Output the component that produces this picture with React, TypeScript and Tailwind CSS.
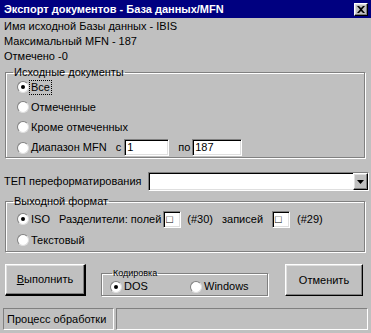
import { useState } from "react";

const raised =
  "border border-t-white border-l-white border-r-black border-b-black shadow-[inset_-1px_-1px_0_#808080,inset_1px_1px_0_#dfdfdf]";
const sunken =
  "border border-t-[#808080] border-l-[#808080] border-r-white border-b-white shadow-[inset_1px_1px_0_#000,inset_-1px_-1px_0_#dfdfdf]";
const etched =
  "border border-[#808080] shadow-[inset_1px_1px_0_#fff,1px_1px_0_#fff]";

function Radio({ checked, label, focus }: { checked?: boolean; label: string; focus?: boolean }) {
  return (
    <div className="flex items-center">
      <span className="w-[12px] h-[12px] rounded-full bg-white border border-t-[#808080] border-l-[#808080] border-r-[#dfdfdf] border-b-[#dfdfdf] flex items-center justify-center">
        {checked && <span className="w-[4px] h-[4px] rounded-full bg-black" />}
      </span>
      <span
        className={
          "ml-[1px] px-[1px] " +
          (focus ? "outline outline-1 outline-dotted outline-black" : "")
        }
      >
        {label}
      </span>
    </div>
  );
}

function Input({ value, w }: { value: string; w: string }) {
  return (
    <div className={`${sunken} ${w} h-[17px] bg-white flex items-center pl-[2px]`}>
      {value}
    </div>
  );
}

export default function App() {
  const [source] = useState(0);

  return (
    <div
      className="w-[371px] h-[333px] bg-[#c0c0c0] text-[11px] leading-[13px] text-black overflow-hidden"
      style={{ fontFamily: '"Liberation Sans", Arial, sans-serif' }}
    >
      <div className="h-[18px] bg-[#000080] flex items-center justify-between pl-[4px] pr-[3px]">
        <span className="text-white font-bold text-[11px]">Экспорт документов - База данных/MFN</span>
        <span className={`${raised} w-[14px] h-[13px] bg-[#c0c0c0] flex items-center justify-center`}>
          <svg width="8" height="7" viewBox="0 0 8 7">
            <path d="M0 0h2l2 2 2-2h2L5 3.5 8 7H6L4 5 2 7H0l3-3.5z" fill="black" />
          </svg>
        </span>
      </div>

      <div className="pt-[1px] pl-[4px] leading-[15px]">
        <div>Имя исходной Базы данных - IBIS</div>
        <div>Максимальный MFN - 187</div>
        <div>Отмечено -0</div>
      </div>

      <fieldset className={`${etched} mt-[2px] ml-[5px] mr-[6px] pl-[11px] pb-[1px] flex flex-col gap-[4px]`}>
        <legend className="-ml-[4px] px-[1px]">Исходные документы</legend>
        <div className="h-[16px] flex items-center">
          <Radio checked={source === 0} label="Все" focus />
        </div>
        <div className="h-[16px] flex items-center">
          <Radio label="Отмеченные" />
        </div>
        <div className="h-[16px] flex items-center">
          <Radio label="Кроме отмеченных" />
        </div>
        <div className="h-[17px] flex items-center">
          <Radio label="Диапазон MFN" />
          <span className="ml-[8px] mr-[3px]">с</span>
          <Input value="1" w="w-[45px]" />
          <span className="ml-[9px] mr-[2px]">по</span>
          <Input value="187" w="w-[50px]" />
        </div>
      </fieldset>

      <div className="mt-[14px] h-[19px] flex items-center pl-[4px] pr-[2px]">
        <span className="w-[144px]">ТЕП переформатирования</span>
        <div className={`${sunken} flex-1 h-[19px] bg-white flex justify-end`}>
          <span className={`${raised} w-[15px] h-full bg-[#c0c0c0] flex items-center justify-center`}>
            <svg width="7" height="4" viewBox="0 0 7 4">
              <path d="M0 0h7L3.5 4z" fill="black" />
            </svg>
          </span>
        </div>
      </div>

      <fieldset className={`${etched} mt-[4px] ml-[5px] mr-[6px] pl-[11px] pb-[3px] flex flex-col gap-[5px]`}>
        <legend className="-ml-[4px] px-[1px]">Выходной формат</legend>
        <div className="mt-[3px] h-[16px] flex items-center">
          <Radio checked label="ISO" />
          <span className="ml-[8px]">Разделители: полей</span>
          <span className="ml-[2px]">
            <Input value="□" w="w-[18px]" />
          </span>
          <span className="ml-[6px]">(#30)</span>
          <span className="ml-[9px]">записей</span>
          <span className="ml-[9px]">
            <Input value="□" w="w-[18px]" />
          </span>
          <span className="ml-[7px]">(#29)</span>
        </div>
        <div className="h-[16px] flex items-center">
          <Radio label="Текстовый" />
        </div>
      </fieldset>

      <div className="mt-[12px] h-[32px] flex items-end pl-[5px] pr-[8px]">
        <button className={`${raised} border-r-2 border-b-2 w-[81px] h-[32px] bg-[#c0c0c0] flex items-center justify-center self-start`}>
          <span>
            <span className="underline">В</span>ыполнить
          </span>
        </button>
        <fieldset className={`${etched} ml-[15px] w-[167px] h-[28px] pl-[8px] flex items-center text-[11px]`}>
          <legend className="ml-[2px] px-[1px] text-[9px] leading-[10px]">Кодировка</legend>
          <div className="w-[80px]">
            <Radio checked label="DOS" />
          </div>
          <Radio label="Windows" />
        </fieldset>
        <div className="flex-1" />
        <button className={`${raised} w-[78px] h-[32px] bg-[#c0c0c0] flex items-center justify-center self-start`}>
          Отменить
        </button>
      </div>

      <div className="mt-[12px] h-[22px] flex gap-[2px] px-[3px]">
        <div className={`${sunken} shadow-none w-[111px] h-full flex items-center pl-[3px]`}>
          Процесс обработки
        </div>
        <div className={`${sunken} shadow-none flex-1 h-full`} />
      </div>
    </div>
  );
}
